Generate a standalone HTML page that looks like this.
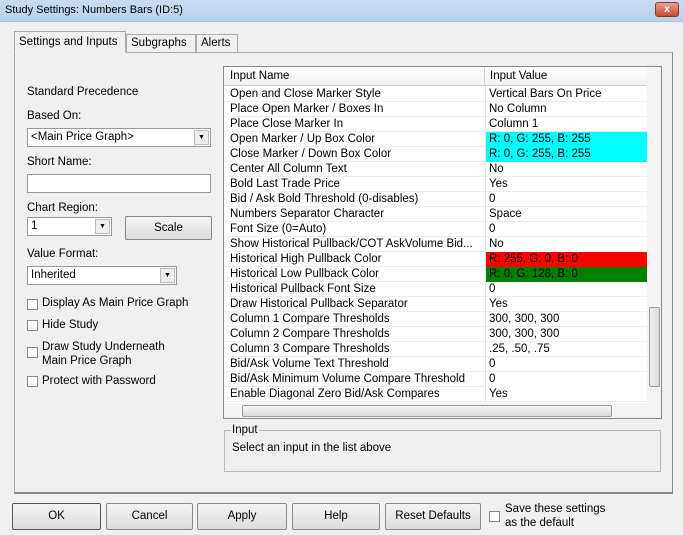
<!DOCTYPE html><html><head><style>
*{box-sizing:border-box}
body{margin:0;width:683px;height:535px;background:#f0f0f0;font-family:"Liberation Sans",sans-serif;font-size:11.5px;color:#000;position:relative;overflow:hidden}
.a{position:absolute;white-space:nowrap}
.title{left:0;top:0;width:683px;height:22px;background:linear-gradient(#c9dcf1,#b9d1ec);border-bottom:1px solid #a9bfd8}
.close{left:655px;top:2px;width:24px;height:15px;background:linear-gradient(#e8a090,#c44a30);border:1px solid #8a3b2c;border-radius:3px;color:#fff;font-size:10px;text-align:center;line-height:13px;font-weight:bold}
.tab{border:1px solid #aaa;border-bottom:none;background:#f0f0f0;padding:3px 4px 0;height:20px}
.panel{left:14px;top:52px;width:659px;height:442px;border:1px solid #aaa;border-right-color:#888;border-bottom:2px solid #888}
.dd{background:#fff;border:1px solid #999;height:19px;padding:2px 3px}
.dd .ar{position:absolute;right:1px;top:1px;width:15px;height:15px;background:#eee;border:1px solid #bbb;font-size:7px;text-align:center;line-height:14px}
.btn{border:1px solid #888;background:linear-gradient(#f4f4f4,#dcdcdc);text-align:center;border-radius:2px}
.cb{width:11px;height:11px;border:1px solid #888;background:#fff}
.grid{left:223px;top:66px;width:439px;height:353px;border:1px solid #888;background:#fff;overflow:hidden}
.row{position:absolute;left:0;height:15px;width:423px;border-bottom:1px solid #eee;line-height:14px;white-space:nowrap}
.row span{position:absolute;left:6px}
.row b{font-weight:normal;position:absolute;left:262px;width:161px;padding-left:3px;height:15px}
</style></head><body>
<div class="a title"><span class="a" style="left:5px;top:4px;font-size:11px">Study Settings: Numbers Bars (ID:5)</span></div>
<div class="a close">x</div>
<div class="a panel"></div>
<div class="a tab" style="left:14px;top:31px;width:112px;height:22px;border-bottom:1px solid #f0f0f0;padding-top:4px">Settings and Inputs</div>
<div class="a tab" style="left:126px;top:34px;width:70px;height:18px;padding-top:2px">Subgraphs</div>
<div class="a tab" style="left:196px;top:34px;width:42px;height:18px;padding-top:2px">Alerts</div>

<div class="a" style="left:27px;top:86px">Standard Precedence</div>
<div class="a" style="left:27px;top:110px">Based On:</div>
<div class="a dd" style="left:27px;top:128px;width:184px">&lt;Main Price Graph&gt;<div class="ar">▼</div></div>
<div class="a" style="left:27px;top:156px">Short Name:</div>
<div class="a dd" style="left:27px;top:174px;width:184px"></div>
<div class="a" style="left:27px;top:202px">Chart Region:</div>
<div class="a dd" style="left:27px;top:217px;width:85px">1<div class="ar">▼</div></div>
<div class="a btn" style="left:125px;top:216px;width:87px;height:24px;line-height:22px">Scale</div>
<div class="a" style="left:27px;top:248px">Value Format:</div>
<div class="a dd" style="left:27px;top:266px;width:150px">Inherited<div class="ar">▼</div></div>
<div class="a cb" style="left:27px;top:299px"></div><div class="a" style="left:42px;top:297px">Display As Main Price Graph</div>
<div class="a cb" style="left:27px;top:320px"></div><div class="a" style="left:42px;top:319px">Hide Study</div>
<div class="a cb" style="left:27px;top:347px"></div><div class="a" style="left:42px;top:340px;line-height:14px">Draw Study Underneath<br>Main Price Graph</div>
<div class="a cb" style="left:27px;top:376px"></div><div class="a" style="left:42px;top:375px">Protect with Password</div>

<div class="a grid">
<div class="row" style="top:0;height:19px;background:linear-gradient(#fff,#f2f2f2);border-bottom:1px solid #ccc;line-height:18px"><span>Input Name</span><b style="border-left:1px solid #ccc;height:19px;left:260px;padding-left:5px">Input Value</b></div>
<div class="row" style="top:20px"><span>Open and Close Marker Style</span><b>Vertical Bars On Price</b></div>
<div class="row" style="top:35px"><span>Place Open Marker / Boxes In</span><b>No Column</b></div>
<div class="row" style="top:50px"><span>Place Close Marker In</span><b>Column 1</b></div>
<div class="row" style="top:65px"><span>Open Marker / Up Box Color</span><b style="background:#0ff">R: 0, G: 255, B: 255</b></div>
<div class="row" style="top:80px"><span>Close Marker / Down Box Color</span><b style="background:#0ff">R: 0, G: 255, B: 255</b></div>
<div class="row" style="top:95px"><span>Center All Column Text</span><b>No</b></div>
<div class="row" style="top:110px"><span>Bold Last Trade Price</span><b>Yes</b></div>
<div class="row" style="top:125px"><span>Bid / Ask Bold Threshold (0-disables)</span><b>0</b></div>
<div class="row" style="top:140px"><span>Numbers Separator Character</span><b>Space</b></div>
<div class="row" style="top:155px"><span>Font Size (0=Auto)</span><b>0</b></div>
<div class="row" style="top:170px"><span>Show Historical Pullback/COT AskVolume Bid...</span><b style="background:#fff">No</b></div>
<div class="row" style="top:185px"><span>Historical High Pullback Color</span><b style="background:#f00">R: 255, G: 0, B: 0</b></div>
<div class="row" style="top:200px"><span>Historical Low Pullback Color</span><b style="background:#008000">R: 0, G: 128, B: 0</b></div>
<div class="row" style="top:215px"><span>Historical Pullback Font Size</span><b>0</b></div>
<div class="row" style="top:230px"><span>Draw Historical Pullback Separator</span><b>Yes</b></div>
<div class="row" style="top:245px"><span>Column 1 Compare Thresholds</span><b>300, 300, 300</b></div>
<div class="row" style="top:260px"><span>Column 2 Compare Thresholds</span><b>300, 300, 300</b></div>
<div class="row" style="top:275px"><span>Column 3 Compare Thresholds</span><b>.25, .50, .75</b></div>
<div class="row" style="top:290px"><span>Bid/Ask Volume Text Threshold</span><b>0</b></div>
<div class="row" style="top:305px"><span>Bid/Ask Minimum Volume Compare Threshold</span><b style="background:#fff">0</b></div>
<div class="row" style="top:320px"><span>Enable Diagonal Zero Bid/Ask Compares</span><b>Yes</b></div>
<div class="a" style="left:261px;top:19px;width:1px;height:316px;background:#e4e4e4"></div>
<div class="a" style="left:423px;top:0;width:15px;height:337px;background:#f4f4f4"></div>
<div class="a" style="left:425px;top:240px;width:11px;height:80px;background:linear-gradient(90deg,#f0f0f0,#ddd);border:1px solid #999;border-radius:2px"></div>
<div class="a" style="left:0;top:336px;width:438px;height:16px;background:#f4f4f4"></div>
<div class="a" style="left:18px;top:338px;width:370px;height:12px;background:linear-gradient(#f4f4f4,#ddd);border:1px solid #999;border-radius:2px"></div>
</div>

<fieldset class="a" style="left:224px;top:424px;width:437px;height:48px;border:1px solid #bbb;margin:0;padding:0 6px"><legend style="padding:0 1px">Input</legend></fieldset>
<div class="a" style="left:232px;top:442px">Select an input in the list above</div>

<div class="a btn" style="left:12px;top:503px;width:89px;height:27px;line-height:25px;border-color:#555">OK</div>
<div class="a btn" style="left:106px;top:503px;width:87px;height:27px;line-height:25px">Cancel</div>
<div class="a btn" style="left:197px;top:503px;width:90px;height:27px;line-height:25px">Apply</div>
<div class="a btn" style="left:292px;top:503px;width:88px;height:27px;line-height:25px">Help</div>
<div class="a btn" style="left:385px;top:503px;width:96px;height:27px;line-height:25px">Reset Defaults</div>
<div class="a cb" style="left:489px;top:511px"></div>
<div class="a" style="left:505px;top:502px;line-height:14px">Save these settings<br>as the default</div>
</body></html>
